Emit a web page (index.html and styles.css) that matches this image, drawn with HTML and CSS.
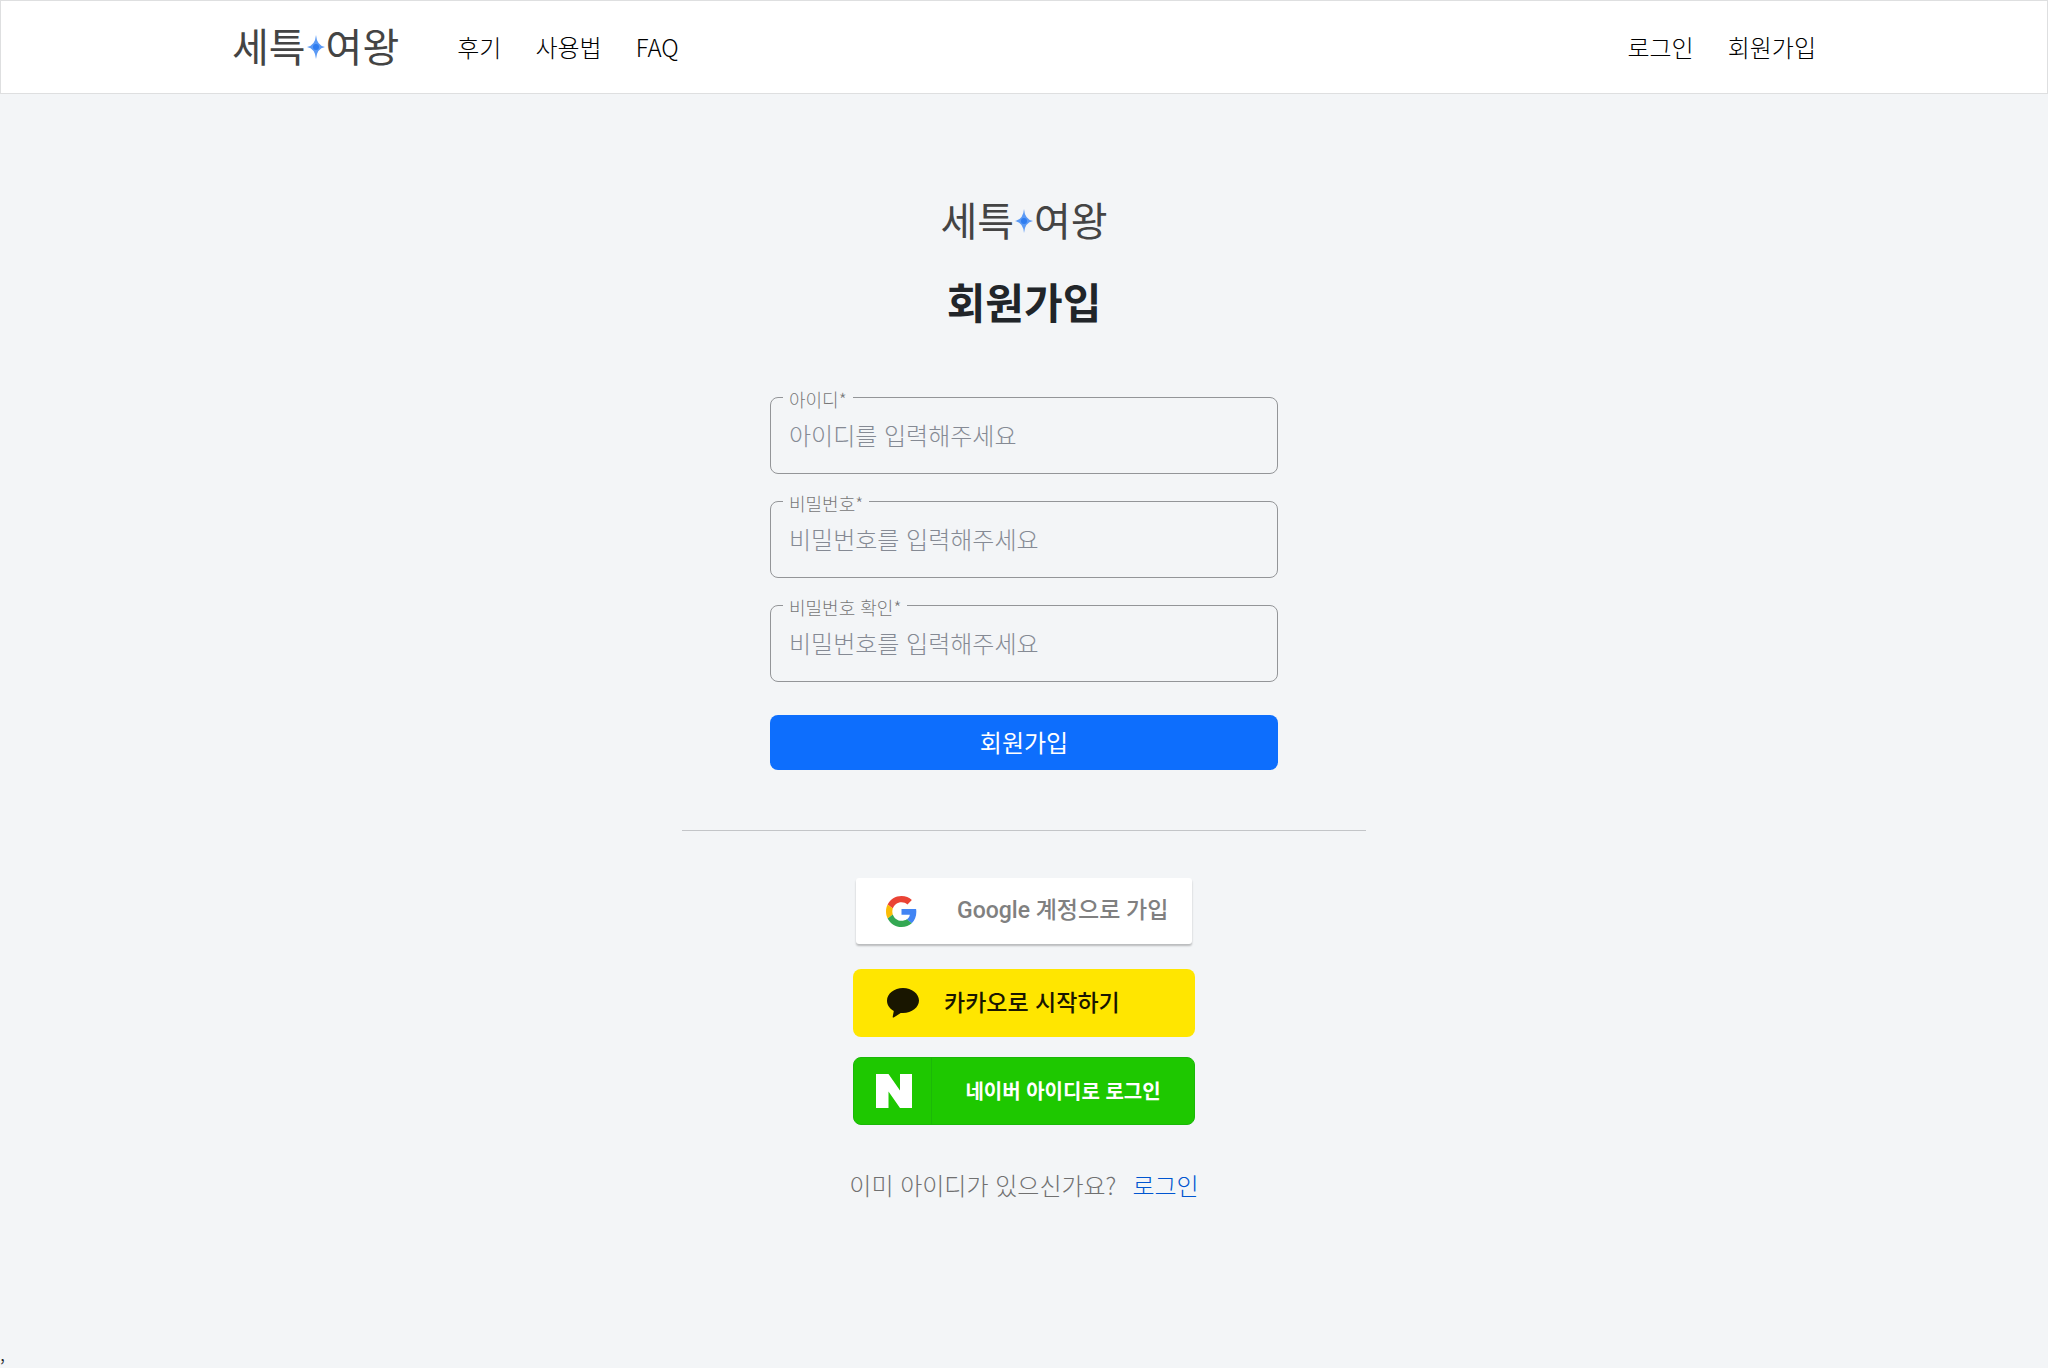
FILE: index.html
```html
<!DOCTYPE html>
<html lang="ko">
<head>
  <meta charset="utf-8">
  <meta name="viewport" content="width=device-width, initial-scale=1">
  <title>회원가입</title>
  <link rel="stylesheet" href="styles.css">
</head>
<body>
  <header class="header">
    <div class="header-inner">
      <a class="logo" href="#"><span>세특</span><svg class="logo-star" viewBox="0 0 20 26" aria-hidden="true"><path d="M10 1Q10.800 11.500 19 13Q10.800 14.500 10 25Q9.200 14.500 1 13Q9.200 11.500 10 1Z" fill="#5b9af5"/><circle cx="10" cy="13" r="3" fill="#2f7df0"/></svg><span>여왕</span></a>
      <nav class="nav nav-main">
        <a href="#">후기</a>
        <a href="#">사용법</a>
        <a href="#">FAQ</a>
      </nav>
      <nav class="nav">
        <a href="#">로그인</a>
        <a href="#">회원가입</a>
      </nav>
    </div>
  </header>
  <main class="main">
    <a class="logo" href="#"><span>세특</span><svg class="logo-star" viewBox="0 0 20 26" aria-hidden="true"><path d="M10 1Q10.800 11.500 19 13Q10.800 14.500 10 25Q9.200 14.500 1 13Q9.200 11.500 10 1Z" fill="#5b9af5"/><circle cx="10" cy="13" r="3" fill="#2f7df0"/></svg><span>여왕</span></a>
    <h1 class="title">회원가입</h1>
    <form class="form">
      <fieldset class="field">
        <legend><label for="user-id">아이디*</label></legend>
        <input id="user-id" type="text" placeholder="아이디를 입력해주세요">
      </fieldset>
      <fieldset class="field">
        <legend><label for="password">비밀번호*</label></legend>
        <input id="password" type="password" placeholder="비밀번호를 입력해주세요">
      </fieldset>
      <fieldset class="field">
        <legend><label for="password-check">비밀번호 확인*</label></legend>
        <input id="password-check" type="password" placeholder="비밀번호를 입력해주세요">
      </fieldset>
      <button class="submit" type="submit">회원가입</button>
    </form>
    <hr class="divider">
    <div class="social">
      <button class="social-button google" type="button">
        <svg class="google-icon" viewBox="0 0 48 48" aria-hidden="true"><path fill="#ea4335" d="M24 9.500c3.540 0 6.710 1.220 9.210 3.600l6.850-6.850C35.900 2.380 30.470 0 24 0 14.620 0 6.510 5.380 2.560 13.220l7.980 6.190C12.430 13.720 17.740 9.500 24 9.500z"/><path fill="#4285f4" d="M46.980 24.550c0-1.570-.15-3.090-.38-4.550H24v9.020h12.940c-.58 2.960-2.260 5.480-4.780 7.180l7.730 6c4.510-4.180 7.090-10.360 7.090-17.650z"/><path fill="#fbbc05" d="M10.530 28.590c-.48-1.450-.76-2.990-.76-4.590s.27-3.140.76-4.590l-7.980-6.190C.92 16.460 0 20.120 0 24s.92 7.540 2.560 10.780l7.970-6.190z"/><path fill="#34a853" d="M24 48c6.480 0 11.930-2.130 15.890-5.810l-7.730-6c-2.150 1.450-4.920 2.300-8.160 2.300-6.260 0-11.570-4.220-13.470-9.910l-7.980 6.190C6.510 42.620 14.620 48 24 48z"/></svg>
        <span>Google 계정으로 가입</span>
      </button>
      <button class="social-button kakao" type="button">
        <svg class="kakao-icon" viewBox="0 0 32 30" aria-hidden="true"><path fill="#191600" d="M16 0C7.200 0 0 5.600 0 12.600c0 4.500 2.600 8.200 6.800 10.500L5.700 28.800c-.1.700.4 1 1 .6l7-4.400c.8.100 1.500.1 2.300.1 8.800 0 16-5.600 16-12.500S24.800 0 16 0z"/></svg>
        <span>카카오로 시작하기</span>
      </button>
      <button class="social-button naver" type="button">
        <span class="naver-mark"><svg class="naver-icon" viewBox="0 0 36 34" aria-hidden="true"><path fill="#fff" d="M0 0h12.500L24 16.500V0h12v34H24L12.500 17.500V34H0z"/></svg></span>
        <span class="naver-text">네이버 아이디로 로그인</span>
      </button>
    </div>
    <p class="signin"><span>이미 아이디가 있으신가요?</span><a href="#">로그인</a></p>
  </main>
  <footer class="tail">,</footer>
</body>
</html>
```
FILE: styles.css
```css
* {
  box-sizing: border-box;
}

body {
  display: flex;
  flex-direction: column;
  min-height: 100vh;
  margin: 0;
  background: #f3f5f7;
  color: #212529;
  font-family: "Noto Sans CJK KR", sans-serif;
  font-size: 24px;
  font-weight: 300;
  line-height: 36px;
}

a {
  color: inherit;
  text-decoration: none;
}

button,
input {
  font: inherit;
}

.header {
  border: 1px solid #dedfe0;
  background: #fff;
}

.header-inner {
  display: flex;
  align-items: center;
  max-width: 1584px;
  height: 92px;
  margin: 0 auto;
}

.logo {
  display: flex;
  align-items: center;
  color: #444;
  font-size: 40px;
  font-weight: 400;
  line-height: 44px;
}

.logo span {
  padding-bottom: 4px;
}

.logo-star {
  width: 20px;
  height: 26px;
}

.nav {
  display: flex;
  gap: 34px;
  color: #000;
}

.nav-main {
  flex: 1;
  margin-left: 58px;
}

.main {
  display: flex;
  flex: 1;
  flex-direction: column;
  align-items: center;
  padding-top: 103px;
}

.title {
  margin: 24px 0 0;
  font-size: 42px;
  font-weight: 700;
  line-height: 64px;
}

.form {
  display: flex;
  flex-direction: column;
  gap: 17px;
  width: 100%;
  max-width: 508px;
  margin-top: 54px;
}

.field {
  min-width: 0;
  margin: 0;
  padding: 0 12px;
  border: 1px solid #939598;
  border-radius: 8px;
}

.field legend {
  height: 20px;
  padding: 0 6px;
  color: #777;
  font-size: 18px;
  line-height: 24px;
}

.field input {
  display: block;
  width: 100%;
  height: 66px;
  padding: 0 6px 12px;
  border: 0;
  outline: 0;
  background: transparent;
  color: #212529;
}

.field input::placeholder {
  color: #858a94;
  opacity: 1;
}

.submit {
  height: 55px;
  margin-top: 16px;
  padding: 0 0 2px;
  border: 0;
  border-radius: 8px;
  background: #0d6efd;
  color: #fff;
  font-weight: 400;
}

.divider {
  width: 100%;
  max-width: 684px;
  margin: 60px 0 47px;
  border: 0;
  border-top: 1px solid #c3c5c8;
}

.social {
  display: flex;
  flex-direction: column;
  align-items: center;
  gap: 20px;
  width: 342px;
}

.social-button {
  display: flex;
  align-items: center;
  width: 100%;
  height: 68px;
  padding: 0;
  border: 0;
  border-radius: 8px;
  font-size: 23px;
  font-weight: 500;
  white-space: nowrap;
}

.google {
  width: 336px;
  height: 66px;
  margin-bottom: 5px;
  padding-left: 30px;
  gap: 40px;
  border-radius: 3px;
  background: #fff;
  box-shadow: 0 2px 2px rgba(0, 0, 0, 0.24);
  color: #808080;
  font-family: Roboto, "Noto Sans CJK KR", sans-serif;
}

.google-icon {
  width: 31px;
  height: 31px;
}

.kakao {
  gap: 25px;
  padding-left: 34px;
  background: #ffe600;
  color: #191600;
}

.kakao span {
  padding-bottom: 4px;
}

.kakao-icon {
  width: 32px;
  height: 30px;
}

.naver {
  border: 1px solid #1bb808;
  background: #1ec800;
  color: #fff;
  font-size: 20px;
  font-weight: 700;
}

.naver-mark {
  display: flex;
  align-items: center;
  width: 78px;
  height: 100%;
  padding-left: 22px;
  border-right: 1px solid #1bb808;
}

.naver-icon {
  width: 36px;
  height: 34px;
}

.naver-text {
  flex: 1;
}

.signin {
  display: flex;
  gap: 16px;
  margin: 42px 0;
  color: #707070;
}

.signin a {
  color: #0055d0;
}

.tail {
  height: 24px;
  font-size: 20px;
  line-height: 20px;
}
```
